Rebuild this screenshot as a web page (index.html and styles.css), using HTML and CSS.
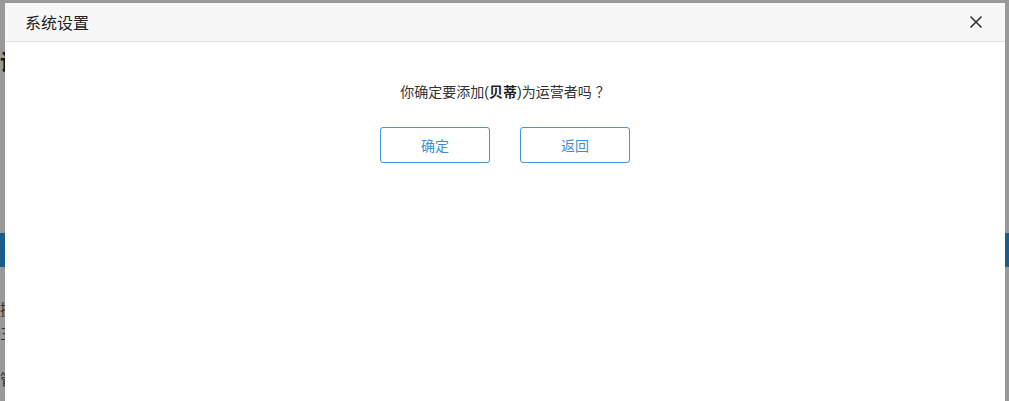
FILE: index.html
```html
<!DOCTYPE html>
<html lang="zh-CN">
<head>
    <meta charset="UTF-8">
    <meta name="viewport" content="width=device-width, initial-scale=1.0">
    <title>系统设置</title>
    <link rel="stylesheet" href="styles.css">
</head>
<body>
    <!-- Page behind the modal -->
    <div class="page">
        <div class="page-title">设置</div>
        <div class="page-band"></div>
        <div class="page-row row-1">操作</div>
        <div class="page-row row-2">三</div>
        <div class="page-row row-3">管理</div>
    </div>

    <div class="mask"></div>

    <div class="dialog">
        <div class="dialog-header">
            <span class="dialog-title">系统设置</span>
            <button class="dialog-close" aria-label="关闭">
                <svg width="14" height="14" viewBox="0 0 14 14">
                    <path d="M1.5 1.5 L12.5 12.5 M12.5 1.5 L1.5 12.5" stroke="#333" stroke-width="1.6" fill="none"/>
                </svg>
            </button>
        </div>
        <div class="dialog-body">
            <p class="confirm-text">你确定要添加(<b>贝蒂</b>)为运营者吗<span class="qmark">？</span></p>
            <div class="actions">
                <button class="btn">确定</button>
                <button class="btn">返回</button>
            </div>
        </div>
    </div>
</body>
</html>
```

FILE: styles.css
```css
body {
    margin: 0;
    padding: 0;
    height: 401px;
    overflow: hidden;
    background: #fff;
    font-family: "Liberation Sans", "Noto Sans CJK SC", sans-serif;
}

.page {
    display: flex;
    flex-direction: column;
}

.page-title {
    margin-top: 44px;
    font-size: 22px;
    font-weight: bold;
    color: #222;
    height: 30px;
}

.page-band {
    margin-top: 159px;
    height: 34px;
    background: #2d9ae8;
}

.page-row {
    font-size: 15px;
    line-height: 18px;
    color: #555;
}

.row-1 { margin-top: 34px; }
.row-2 { margin-top: 6px; }
.row-3 { margin-top: 28px; }

/* Dark overlay */
.mask {
    position: fixed;
    inset: 0;
    background: rgba(0, 0, 0, 0.4);
}

.dialog {
    position: fixed;
    top: 3px;
    left: 5px;
    width: 1000px;
    bottom: -40px;
    background: #fff;
    display: flex;
    flex-direction: column;
}

.dialog-header {
    height: 38px;
    background: #f7f7f7;
    border-bottom: 1px solid #e2e2e2;
    display: flex;
    align-items: center;
    justify-content: space-between;
    padding: 0 22px 0 20px;
}

.dialog-title {
    font-size: 16px;
    color: #222;
}

.dialog-close {
    border: none;
    background: none;
    padding: 0;
    width: 14px;
    height: 14px;
    cursor: pointer;
    display: flex;
}

.dialog-body {
    display: flex;
    flex-direction: column;
    align-items: center;
}

.confirm-text {
    margin: 40px 0 0;
    font-size: 14px;
    line-height: 20px;
    color: #333;
}

.confirm-text b {
    color: #222;
}

.qmark {
    padding-left: 4px;
}

.actions {
    display: flex;
    gap: 30px;
    margin-top: 25px;
}

.btn {
    width: 110px;
    height: 36px;
    border: 1px solid #3c9ae0;
    border-radius: 3px;
    background: #fff;
    color: #3c8fd6;
    font-size: 14px;
    font-family: inherit;
    cursor: pointer;
}
```
